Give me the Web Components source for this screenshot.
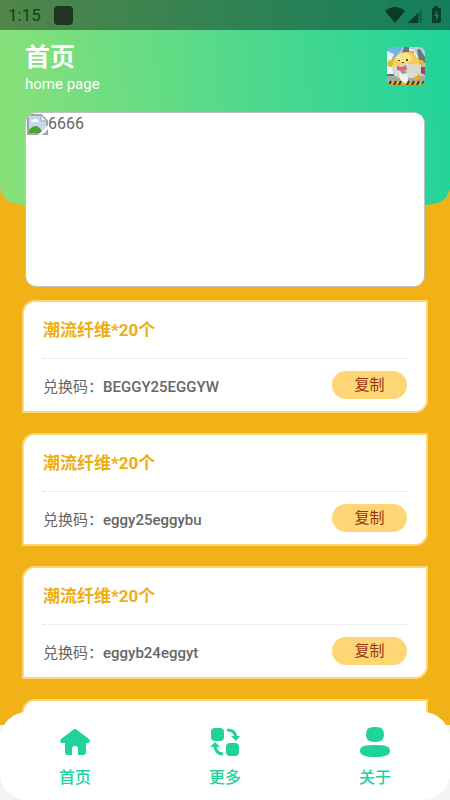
<!DOCTYPE html>
<html lang="zh-CN">
<head>
<meta charset="utf-8">
<meta name="viewport" content="width=device-width, initial-scale=1">
<title>首页</title>
<style>
  body {
    margin: 0;
    font-family: Roboto, "Noto Sans CJK SC", sans-serif;
    font-size: 15px;
    color: #666;
    --accent: #20d39b;
    --gold: #f0b217;
    --pale-gold: #ffd675;
  }
</style>
</head>
<body>
<app-shell>
  <status-bar slot="top" time="1:15"></status-bar>
  <page-header slot="top" heading="首页" sub="home page"></page-header>
  <banner-image alt="6666"></banner-image>
  <gift-card code="BEGGY25EGGYW">潮流纤维*20个</gift-card>
  <gift-card code="eggy25eggybu">潮流纤维*20个</gift-card>
  <gift-card code="eggyb24eggyt">潮流纤维*20个</gift-card>
  <gift-card></gift-card>
  <tab-bar slot="bottom">
    <tab-item icon="home">首页</tab-item>
    <tab-item icon="swap">更多</tab-item>
    <tab-item icon="user">关于</tab-item>
  </tab-bar>
</app-shell>

<script>
class AppShell extends HTMLElement {
  constructor() {
    super();
    this.attachShadow({mode: 'open'}).innerHTML = `
    <style>
      :host { display: flex; flex-direction: column; height: 100vh; overflow: hidden; }
      .page { flex: 1; min-height: 0; overflow: hidden; position: relative; z-index: 0; background: var(--gold); }
      .backdrop { position: absolute; z-index: -1; top: 0; left: 0; width: 100%; height: 230px; }
      main { display: flex; flex-direction: column; gap: 20px; padding: 0 22px; }
      ::slotted(banner-image) { margin: 0 3px -7px; }
      footer { position: relative; background: #f2f4f3; }
    </style>
    <div class="page">
      <svg class="backdrop" viewBox="0 0 450 230" preserveAspectRatio="none" aria-hidden="true">
        <defs>
          <linearGradient id="fade" x1="0" y1="0.04" x2="1" y2="0">
            <stop offset="0" stop-color="#87e07a"/>
            <stop offset="1" stop-color="#20d39b"/>
          </linearGradient>
        </defs>
        <path fill="url(#fade)" d="M0 0H450V188Q448 200 437 203Q335 226 225 226Q115 226 13 203Q2 200 0 188Z"/>
      </svg>
      <slot name="top"></slot>
      <main><slot></slot></main>
    </div>
    <footer><slot name="bottom"></slot></footer>
    `;
  }
}

class StatusBar extends HTMLElement {
  constructor() {
    super();
    this.attachShadow({mode: 'open'}).innerHTML = `
    <style>
      :host {
        display: flex; align-items: center; height: 30px; box-sizing: border-box;
        padding: 0 8px; background: rgba(0, 0, 0, .4); color: #1c3a22; font-size: 17px;
      }
      i { width: 19px; height: 19px; margin-left: 13px; border-radius: 4px; background: #1d3521; }
      svg { margin-left: auto; color: #0b3c27; }
    </style>
    <span>${this.getAttribute('time')}</span><i></i>
    <svg width="58" height="20" viewBox="0 0 58 20" fill="currentColor" aria-hidden="true">
      <path d="M1 6Q11-2 21 6L11 18Z"/>
      <path d="M24 18L38 4V18Z" opacity=".35"/>
      <path d="M24 18L34 8V18Z"/>
      <path fill-rule="evenodd" d="M50 1h4v2h2q1 0 1 1v13q0 1-1 1h-7q-1 0-1-1V4q0-1 1-1h1ZM53 5l-3 6h2v5l3-6h-2Z"/>
    </svg>
    `;
  }
}

class PageHeader extends HTMLElement {
  constructor() {
    super();
    this.attachShadow({mode: 'open'}).innerHTML = `
    <style>
      :host { display: flex; justify-content: space-between; align-items: center; height: 72px; padding: 0 25px 10px; color: #fff; }
      h1 { margin: 0; padding-top: 4px; font-size: 25px; line-height: 32px; font-weight: 700; }
      p { margin: 0; font-size: 15px; line-height: 20px; }
      svg { border-radius: 6px; }
    </style>
    <div>
      <h1>${this.getAttribute('heading')}</h1>
      <p>${this.getAttribute('sub')}</p>
    </div>
    <svg width="38" height="38" viewBox="0 0 38 38" role="img" aria-label="avatar">
      <path fill="#b9ced6" d="M0 0h38v38H0z"/>
      <path fill="#6cb3e6" d="M0 0h16L7 14H0z"/>
      <path fill="#eef4f5" d="M0 4l7 3-3 7-4 1zM22 2l5 1 4 7-4 2zM0 19h6v10H0z"/>
      <path fill="#617782" d="M17 0h5v5l-8 3zM30 3l3-1 5 8v6l-6-3zM0 27h7v5H0z"/>
      <path fill="#83545f" d="M34 20h4v8l-4-2z"/>
      <path fill="#a5aaa4" d="M0 29h38v5H0z"/>
      <rect x="1" y="13" width="6" height="7" rx="3" fill="#efb41c"/>
      <rect x="30" y="13" width="7" height="7" rx="3" fill="#efb41c"/>
      <path fill="#e7ad22" d="M22 4h5v4h-5zM27 27h5v6h-5z"/>
      <ellipse cx="19" cy="16" rx="13" ry="11" fill="#f5cd58"/>
      <ellipse cx="17" cy="11" rx="8" ry="5" fill="#fbe28a"/>
      <path fill="#d9d8d3" d="M5 18Q12 20 19 16Q27 19 34 17Q35 28 26 31H12Q4 27 5 18Z"/>
      <path fill="#efede6" d="M12 24h8l1 11q-6 3-8-3z"/>
      <path fill="#e46276" d="M10 19l5 1 4-2 1 5-5 1-5-1z"/>
      <path fill="#6daaa0" d="M13 24h6l1 2-5 1z"/>
      <path fill="#4c4030" d="M11 13h2v1h-2zM19 12h2v2h-2zM15 15h2v1h-2z"/>
      <path fill="#e8aa22" d="M0 34h38v4H0z"/>
      <path stroke="#40351f" stroke-width="2" d="M2 38l2-4M7 38l2-4M12 38l2-4M20 38l2-4M25 38l2-4M30 38l2-4M35 38l2-4"/>
      <path fill="#f3f1ea" d="M15 30h6l-1 6q-3 1-5-2z"/>
    </svg>
    `;
  }
}

class BannerImage extends HTMLElement {
  constructor() {
    super();
    this.attachShadow({mode: 'open'}).innerHTML = `
    <style>
      :host {
        display: flex; align-items: flex-start; height: 175px; box-sizing: border-box; padding: 1px;
        border: 1px solid #c3c3bd; border-radius: 11px; overflow: hidden; background: #fff;
      }
      span { font-size: 16px; line-height: 19px; }
    </style>
    <svg width="21" height="21" viewBox="0 0 21 21" aria-hidden="true">
      <path fill="#c7d8f5" d="M1 1h13l6 6v13H1z"/>
      <path fill="#fff" d="M4 8q0-2 2-2 1-2 3-1 2 0 2 3z"/>
      <path fill="#4aa52c" d="M1 20v-3q4-5 8-5t7 8z"/>
      <path fill="none" stroke="#a3a3a3" stroke-width="2" d="M1 1H14L20 7V20H1Z"/>
      <path fill="#f4f4f4" stroke="#a3a3a3" d="M14 1v6h6z"/>
      <path fill="#fff" d="M21 11v4l-6 6h-4z"/>
    </svg>
    <span>${this.getAttribute('alt')}</span>
    `;
  }
}

class GiftCard extends HTMLElement {
  constructor() {
    super();
    this.attachShadow({mode: 'open'}).innerHTML = `
    <style>
      :host {
        display: block; height: 113px; box-sizing: border-box; padding: 0 19px; flex: none;
        border: 2px solid var(--pale-gold); border-radius: 13px 0; background: #fff;
      }
      h2 {
        margin: 0; height: 57px; box-sizing: border-box; border-bottom: 1px dotted #ddd;
        font-size: 17px; line-height: 56px; font-weight: 700; color: #edae12;
      }
      div { display: flex; justify-content: space-between; align-items: center; height: 52px; }
      b { font-weight: 500; }
      button {
        width: 75px; height: 28px; padding: 0; border: 0; border-radius: 14px;
        background: var(--pale-gold); color: #983413; font: inherit; line-height: 28px;
      }
    </style>
    <h2><slot></slot></h2>
    ${this.hasAttribute('code') ? `
    <div>
      <span>兑换码：<b>${this.getAttribute('code')}</b></span>
      <button type="button">复制</button>
    </div>` : ''}
    `;
    const button = this.shadowRoot.querySelector('button');
    if (button) button.addEventListener('click', () => navigator.clipboard?.writeText(this.getAttribute('code')));
  }
}

class TabBar extends HTMLElement {
  constructor() {
    super();
    this.attachShadow({mode: 'open'}).innerHTML = `
    <style>
      :host { display: block; margin-top: -13px; }
      nav { display: flex; height: 88px; border-radius: 27px; background: #fff; }
      ::slotted(tab-item) { flex: 1; }
    </style>
    <nav><slot></slot></nav>
    `;
  }
}

const icons = {
  home: '<path d="M14 3Q16 1 18 3L30 12Q32 15 29 16H27V25Q27 28 24 28H19V22Q19 19 16 19T13 22V28H9Q6 28 6 25V16H3Q0 15 2 12Z"/>',
  swap: `<rect x="2" y="1" width="13" height="13" rx="4"/><rect x="17" y="16" width="13" height="13" rx="4"/>
    <path fill="none" stroke="currentColor" stroke-width="3" d="M18 3Q26 3 27 10M14 27Q7 27 6 19"/>
    <path d="M22 9H31L27 14ZM1 20L6 15L11 20Z"/>`,
  user: '<path d="M8 3Q9 0 16 0T24 3Q26 8 24 12Q22 15 16 15T8 12Q6 8 8 3ZM5 19Q8 18 16 18T27 19Q31 20 31 24Q31 30 16 30T1 24Q1 20 5 19Z"/>',
};

class TabItem extends HTMLElement {
  constructor() {
    super();
    this.attachShadow({mode: 'open'}).innerHTML = `
    <style>
      :host { display: block; }
      a {
        display: flex; flex-direction: column; align-items: center; gap: 9px; padding-top: 15px;
        color: var(--accent); font-size: 16px; line-height: 24px; font-weight: 500; text-decoration: none;
      }
    </style>
    <a href="#${this.getAttribute('icon')}">
      <svg width="32" height="30" viewBox="0 0 32 30" fill="currentColor" aria-hidden="true">${icons[this.getAttribute('icon')]}</svg>
      <slot></slot>
    </a>
    `;
  }
}

customElements.define('app-shell', AppShell);
customElements.define('status-bar', StatusBar);
customElements.define('page-header', PageHeader);
customElements.define('banner-image', BannerImage);
customElements.define('gift-card', GiftCard);
customElements.define('tab-bar', TabBar);
customElements.define('tab-item', TabItem);
</script>
</body>
</html>
